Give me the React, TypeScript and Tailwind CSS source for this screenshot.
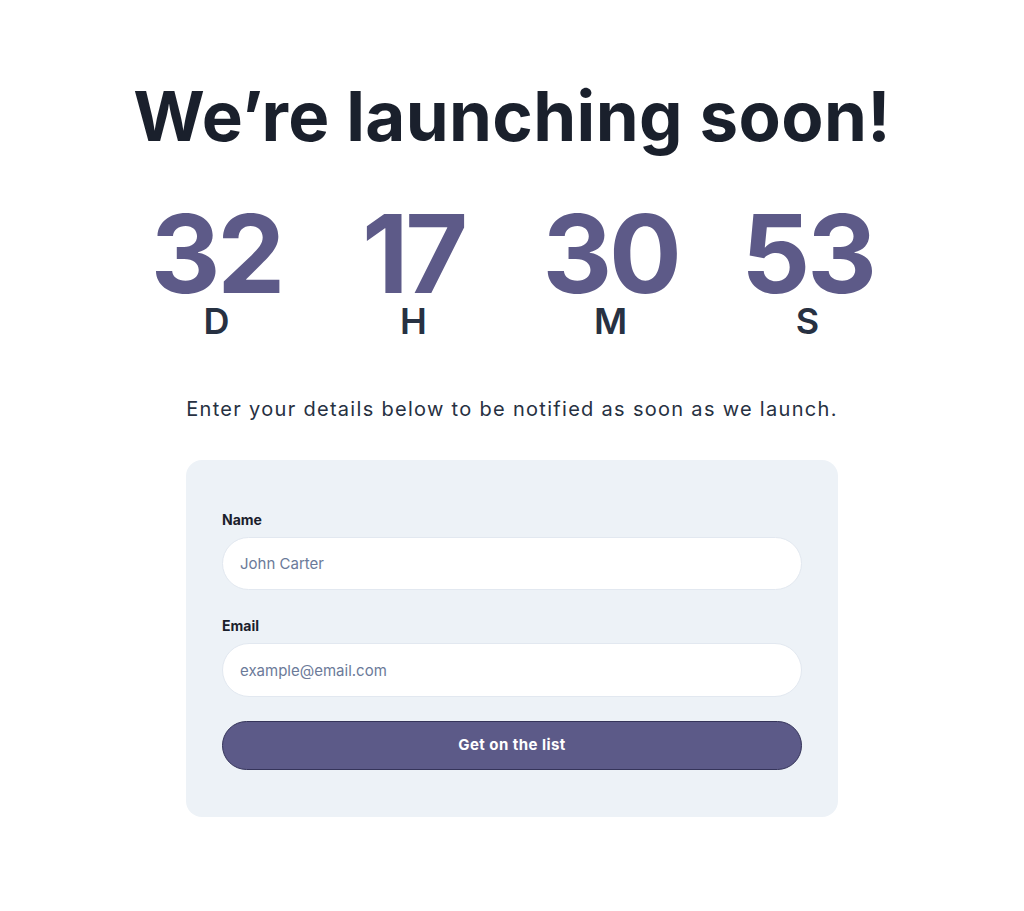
import React from 'react';

const units = [
  { value: '32', label: 'D' },
  { value: '17', label: 'H' },
  { value: '30', label: 'M' },
  { value: '53', label: 'S' },
];

export default function App() {
  return (
    <div className="min-h-screen bg-white flex flex-col items-center pt-[82px] font-['Inter',sans-serif]">
      <h1 className="text-[69px] leading-none font-bold tracking-[0.005em] text-[#1a202c]">
        We’re launching soon!
      </h1>

      <div className="grid grid-cols-4 w-[788px] mt-[60px]">
        {units.map((u) => (
          <div key={u.label} className="flex flex-col items-center">
            <span className="text-[108px] leading-[86px] font-bold tracking-[-0.03em] text-[#5d5a88]">
              {u.value}
            </span>
            <span className="text-[36px] leading-[28px] font-semibold text-[#273142] mt-[10px]">
              {u.label}
            </span>
          </div>
        ))}
      </div>

      <p className="mt-[60px] text-xl tracking-[0.065em] text-[#273142]">
        Enter your details below to be notified as soon as we launch.
      </p>

      <form
        className="mt-[37px] w-[652px] rounded-2xl bg-[#edf2f7] px-9 pt-[50px] pb-[47px] flex flex-col"
        onSubmit={(e) => e.preventDefault()}
      >
        <label className="text-sm font-bold text-[#1a202c] mb-[7px]">Name</label>
        <input
          type="text"
          placeholder="John Carter"
          className="h-[53px] rounded-full border border-[#e2e8f0] bg-white px-[17px] text-[15px] text-[#1a202c] placeholder:text-[#6b7a99] outline-none"
        />

        <label className="mt-[26px] text-sm font-bold text-[#1a202c] mb-[7px]">Email</label>
        <input
          type="email"
          placeholder="example@email.com"
          className="h-[54px] rounded-full border border-[#e2e8f0] bg-white px-[17px] text-[15px] text-[#1a202c] placeholder:text-[#6b7a99] outline-none"
        />

        <button
          type="submit"
          className="mt-6 h-[49px] rounded-full border border-[#35345a] bg-[#5c5a88] text-[15px] font-bold tracking-[0.03em] text-white"
        >
          Get on the list
        </button>
      </form>
    </div>
  );
}
